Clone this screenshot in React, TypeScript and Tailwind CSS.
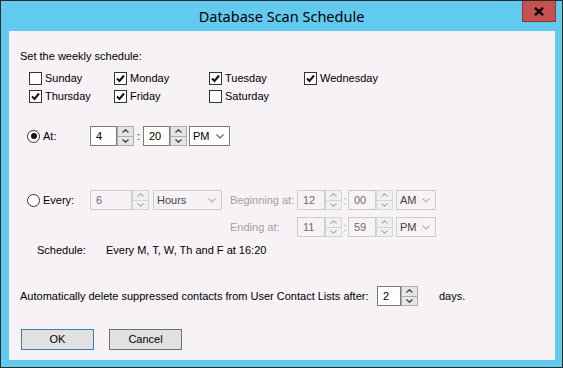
import React from "react";

const UpChev = ({ c }: { c: string }) => (
  <svg width="7" height="4" viewBox="0 0 7 4" className="block">
    <path d="M0.5 3.5 L3.5 0.8 L6.5 3.5" fill="none" stroke={c} strokeWidth="1.3" />
  </svg>
);
const DownChev = ({ c }: { c: string }) => (
  <svg width="7" height="4" viewBox="0 0 7 4" className="block">
    <path d="M0.5 0.5 L3.5 3.2 L6.5 0.5" fill="none" stroke={c} strokeWidth="1.3" />
  </svg>
);

function Spinner({ value, tw, disabled }: { value: string; tw: string; disabled?: boolean }) {
  const chev = disabled ? "#B5B5B5" : "#404040";
  return (
    <div className="flex h-[20px]">
      <div
        className={`${tw} h-full flex items-center pl-[5px] border ${
          disabled ? "border-[#CCCCCC] text-[#6D6D6D] bg-[#F6F2F6]" : "border-[#7A7A7A] text-black bg-white"
        }`}
      >
        {value}
      </div>
      <div
        className={`w-[17px] h-full flex flex-col border ${
          disabled ? "border-[#D5D5D5] bg-[#F0F0F0]" : "border-[#ADADAD] bg-[#E5E5E5]"
        }`}
      >
        <div className={`flex-1 flex items-center justify-center border-b ${disabled ? "border-[#D5D5D5]" : "border-[#ADADAD]"}`}>
          <UpChev c={chev} />
        </div>
        <div className="flex-1 flex items-center justify-center">
          <DownChev c={chev} />
        </div>
      </div>
    </div>
  );
}

function Select({ value, tw, disabled }: { value: string; tw: string; disabled?: boolean }) {
  return (
    <div
      className={`${tw} h-[20px] flex items-center justify-between pl-[3px] pr-[5px] border ${
        disabled ? "border-[#CCCCCC] bg-[#F6F2F6] text-[#444444]" : "border-[#7A7A7A] bg-white text-black"
      }`}
    >
      <span>{value}</span>
      <svg width="8" height="5" viewBox="0 0 8 5" className="block">
        <path d="M0.5 0.5 L4 4 L7.5 0.5" fill="none" stroke={disabled ? "#BBBBBB" : "#707070"} strokeWidth="1.4" />
      </svg>
    </div>
  );
}

function Check({ label, checked }: { label: string; checked?: boolean }) {
  return (
    <div className="flex items-center h-[18px]">
      <div className="w-[13px] h-[13px] border border-[#333333] bg-white flex items-center justify-center">
        {checked && (
          <svg width="9" height="9" viewBox="0 0 9 9" className="block">
            <path d="M1 4.5 L3.5 7 L8 1.5" fill="none" stroke="#111" strokeWidth="2" />
          </svg>
        )}
      </div>
      <span className="ml-[3px]">{label}</span>
    </div>
  );
}

function Radio({ checked }: { checked?: boolean }) {
  return (
    <div className="w-[13px] h-[13px] rounded-full border border-[#333333] bg-white flex items-center justify-center">
      {checked && <div className="w-[6px] h-[6px] rounded-full bg-[#111]" />}
    </div>
  );
}

export default function App() {
  return (
    <div className="w-[563px] h-[368px] bg-[#62C9EF] border border-[#2B2B2B] flex flex-col relative overflow-hidden">
      <div className="h-[30px] flex items-center justify-center text-[14.5px] text-black font-['Noto_Sans',sans-serif] pt-[1px]">
        Database Scan Schedule
      </div>
      <div className="absolute left-[521px] top-[-1px] w-[34px] h-[22px] bg-[#C75050] border border-[#8C3A3A] flex items-center justify-center">
        <svg width="10" height="9" viewBox="0 0 10 9" className="block">
          <path d="M1 0.8 L9 8.2 M9 0.8 L1 8.2" stroke="#000" strokeWidth="2.3" />
        </svg>
      </div>
      <div className="ml-[8px] mr-[7px] h-[329px] bg-[#F6F2F6] flex flex-col text-[11px] leading-[13px] text-black font-['Liberation_Sans',Arial,sans-serif]">
        <div className="mt-[19px] pl-[11px] h-[13px]">Set the weekly schedule:</div>
        <div className="mt-[6px] pl-[20px] grid grid-cols-[85px_95px_95px_auto]">
          <Check label="Sunday" />
          <Check label="Monday" checked />
          <Check label="Tuesday" checked />
          <Check label="Wednesday" checked />
          <Check label="Thursday" checked />
          <Check label="Friday" checked />
          <Check label="Saturday" />
        </div>
        <div className="mt-[21px] pl-[18px] flex items-center h-[20px]">
          <div className="w-[63px] flex items-center">
            <Radio checked />
            <span className="ml-[3px]">At:</span>
          </div>
          <Spinner value="4" tw="w-[27px]" />
          <div className="w-[9px] text-center">:</div>
          <Spinner value="20" tw="w-[27px]" />
          <div className="ml-[2px]">
            <Select value="PM" tw="w-[41px]" />
          </div>
        </div>
        <div className="mt-[44px] pl-[18px] flex items-center h-[20px]">
          <div className="w-[63px] flex items-center">
            <Radio />
            <span className="ml-[3px]">Every:</span>
          </div>
          <Spinner value="6" tw="w-[42px]" disabled />
          <div className="ml-[4px]">
            <Select value="Hours" tw="w-[69px]" disabled />
          </div>
          <div className="ml-[8px] w-[67px] text-[#A0A0A0]">Beginning at:</div>
          <Spinner value="12" tw="w-[28px]" disabled />
          <div className="w-[6px] text-center text-[#A0A0A0]">:</div>
          <Spinner value="00" tw="w-[28px]" disabled />
          <div className="ml-[3px]">
            <Select value="AM" tw="w-[40px]" disabled />
          </div>
        </div>
        <div className="mt-[7px] pl-[221px] flex items-center h-[20px]">
          <div className="w-[67px] text-[#A0A0A0]">Ending at:</div>
          <Spinner value="11" tw="w-[28px]" disabled />
          <div className="w-[6px] text-center text-[#A0A0A0]">:</div>
          <Spinner value="59" tw="w-[28px]" disabled />
          <div className="ml-[3px]">
            <Select value="PM" tw="w-[40px]" disabled />
          </div>
        </div>
        <div className="mt-[5px] pl-[28px] flex items-center h-[16px]">
          <div className="w-[69px]">Schedule:</div>
          <div>Every M, T, W, Th and F at 16:20</div>
        </div>
        <div className="mt-[28px] pl-[11px] flex items-center h-[20px]">
          <div className="w-[357px]">Automatically delete suppressed contacts from User Contact Lists after:</div>
          <Spinner value="2" tw="w-[24px]" />
          <div className="ml-[21px]">days.</div>
        </div>
        <div className="mt-[23px] pl-[12px] flex items-center gap-[15px]">
          <div className="w-[73px] h-[21px] border border-[#3C7FB1] bg-[#E1E1E1] flex items-center justify-center">OK</div>
          <div className="w-[73px] h-[21px] border border-[#707070] bg-[#E1E1E1] flex items-center justify-center">Cancel</div>
        </div>
      </div>
    </div>
  );
}
